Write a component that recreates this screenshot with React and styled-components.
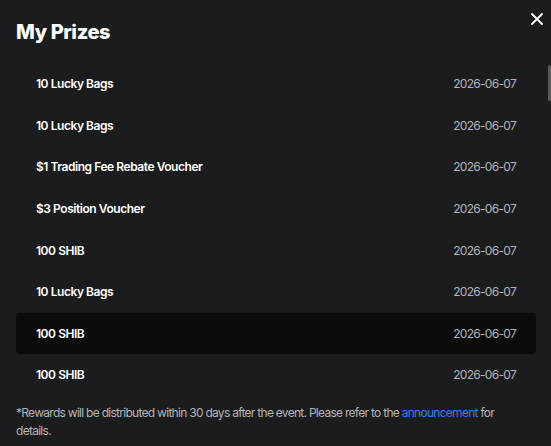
import styled, { createGlobalStyle } from "styled-components";

const prizes = [
  { name: "10 Lucky Bags", date: "2026-06-07" },
  { name: "10 Lucky Bags", date: "2026-06-07" },
  { name: "$1 Trading Fee Rebate Voucher", date: "2026-06-07" },
  { name: "$3 Position Voucher", date: "2026-06-07" },
  { name: "100 SHIB", date: "2026-06-07" },
  { name: "10 Lucky Bags", date: "2026-06-07" },
  { name: "100 SHIB", date: "2026-06-07", active: true },
  { name: "100 SHIB", date: "2026-06-07" },
];

const Global = createGlobalStyle`
  html, body {
    margin: 0;
    background: #1b1c1e;
  }
  body {
    font-family: Inter, "Liberation Sans", sans-serif;
    color: #fff;
  }
`;

const App = () => {
  return (
    <>
      <Global />
      <Modal>
        <Header>
          <Title>My Prizes</Title>
          <Close aria-label="close">
            <svg width="12" height="12" viewBox="0 0 12 12">
              <path d="M1 1L11 11M11 1L1 11" stroke="#fff" strokeWidth="1.8" strokeLinecap="round" />
            </svg>
          </Close>
        </Header>
        <ListWrap>
          <List>
            {prizes.map((p, i) => (
              <Row key={i} $active={p.active}>
                <Name>{p.name}</Name>
                <DateText>{p.date}</DateText>
              </Row>
            ))}
          </List>
          <Scrollbar />
        </ListWrap>
        <Note>
          *Rewards will be distributed within 30 days after the event. Please refer to the{" "}
          <NoteLink href="#">announcement</NoteLink> for details.
        </Note>
      </Modal>
    </>
  );
};

const Modal = styled.div`
  width: 551px;
  height: 446px;
  box-sizing: border-box;
  background: #1b1c1e;
  padding: 0 0 0 16px;
  display: flex;
  flex-direction: column;
  overflow: hidden;
`;
const Header = styled.div`
  position: relative;
  height: 63px;
  flex: none;
  display: flex;
  align-items: flex-start;
`;
const Title = styled.h1`
  margin: 20px 0 0;
  font-size: 20px;
  font-weight: 800;
  letter-spacing: -0.4px;
  line-height: 24px;
  color: #fff;
`;
const Close = styled.button`
  position: absolute;
  right: 8px;
  top: 13px;
  width: 12px;
  height: 12px;
  padding: 0;
  border: none;
  background: none;
  display: flex;
  cursor: pointer;
`;
const ListWrap = styled.div`
  position: relative;
  flex: none;
  display: flex;
  height: 333px;
`;
const List = styled.div`
  width: 520px;
  display: flex;
  flex-direction: column;
`;
const Scrollbar = styled.div`
  position: absolute;
  right: 0;
  top: 2px;
  width: 3px;
  height: 36px;
  border-radius: 2px;
  background: #5a5b5e;
`;
const Row = styled.div`
  height: 41.6px;
  flex: none;
  box-sizing: border-box;
  padding: 0 20px;
  display: flex;
  align-items: center;
  justify-content: space-between;
  border-radius: 4px;
  background: ${(p) => (p.$active ? "#0c0c0d" : "transparent")};
`;
const Name = styled.span`
  font-size: 12px;
  font-weight: 600;
  letter-spacing: -0.45px;
  color: #fff;
`;
const DateText = styled.span`
  font-size: 12px;
  font-weight: 400;
  letter-spacing: -0.7px;
  color: #b3b3b5;
`;
const Note = styled.p`
  width: 512px;
  margin: 8px 0 0;
  font-size: 12px;
  line-height: 18px;
  letter-spacing: -0.72px;
  color: #b4b4b6;
`;
const NoteLink = styled.a`
  color: #2f7cf6;
  text-decoration: none;
`;

export default App;
